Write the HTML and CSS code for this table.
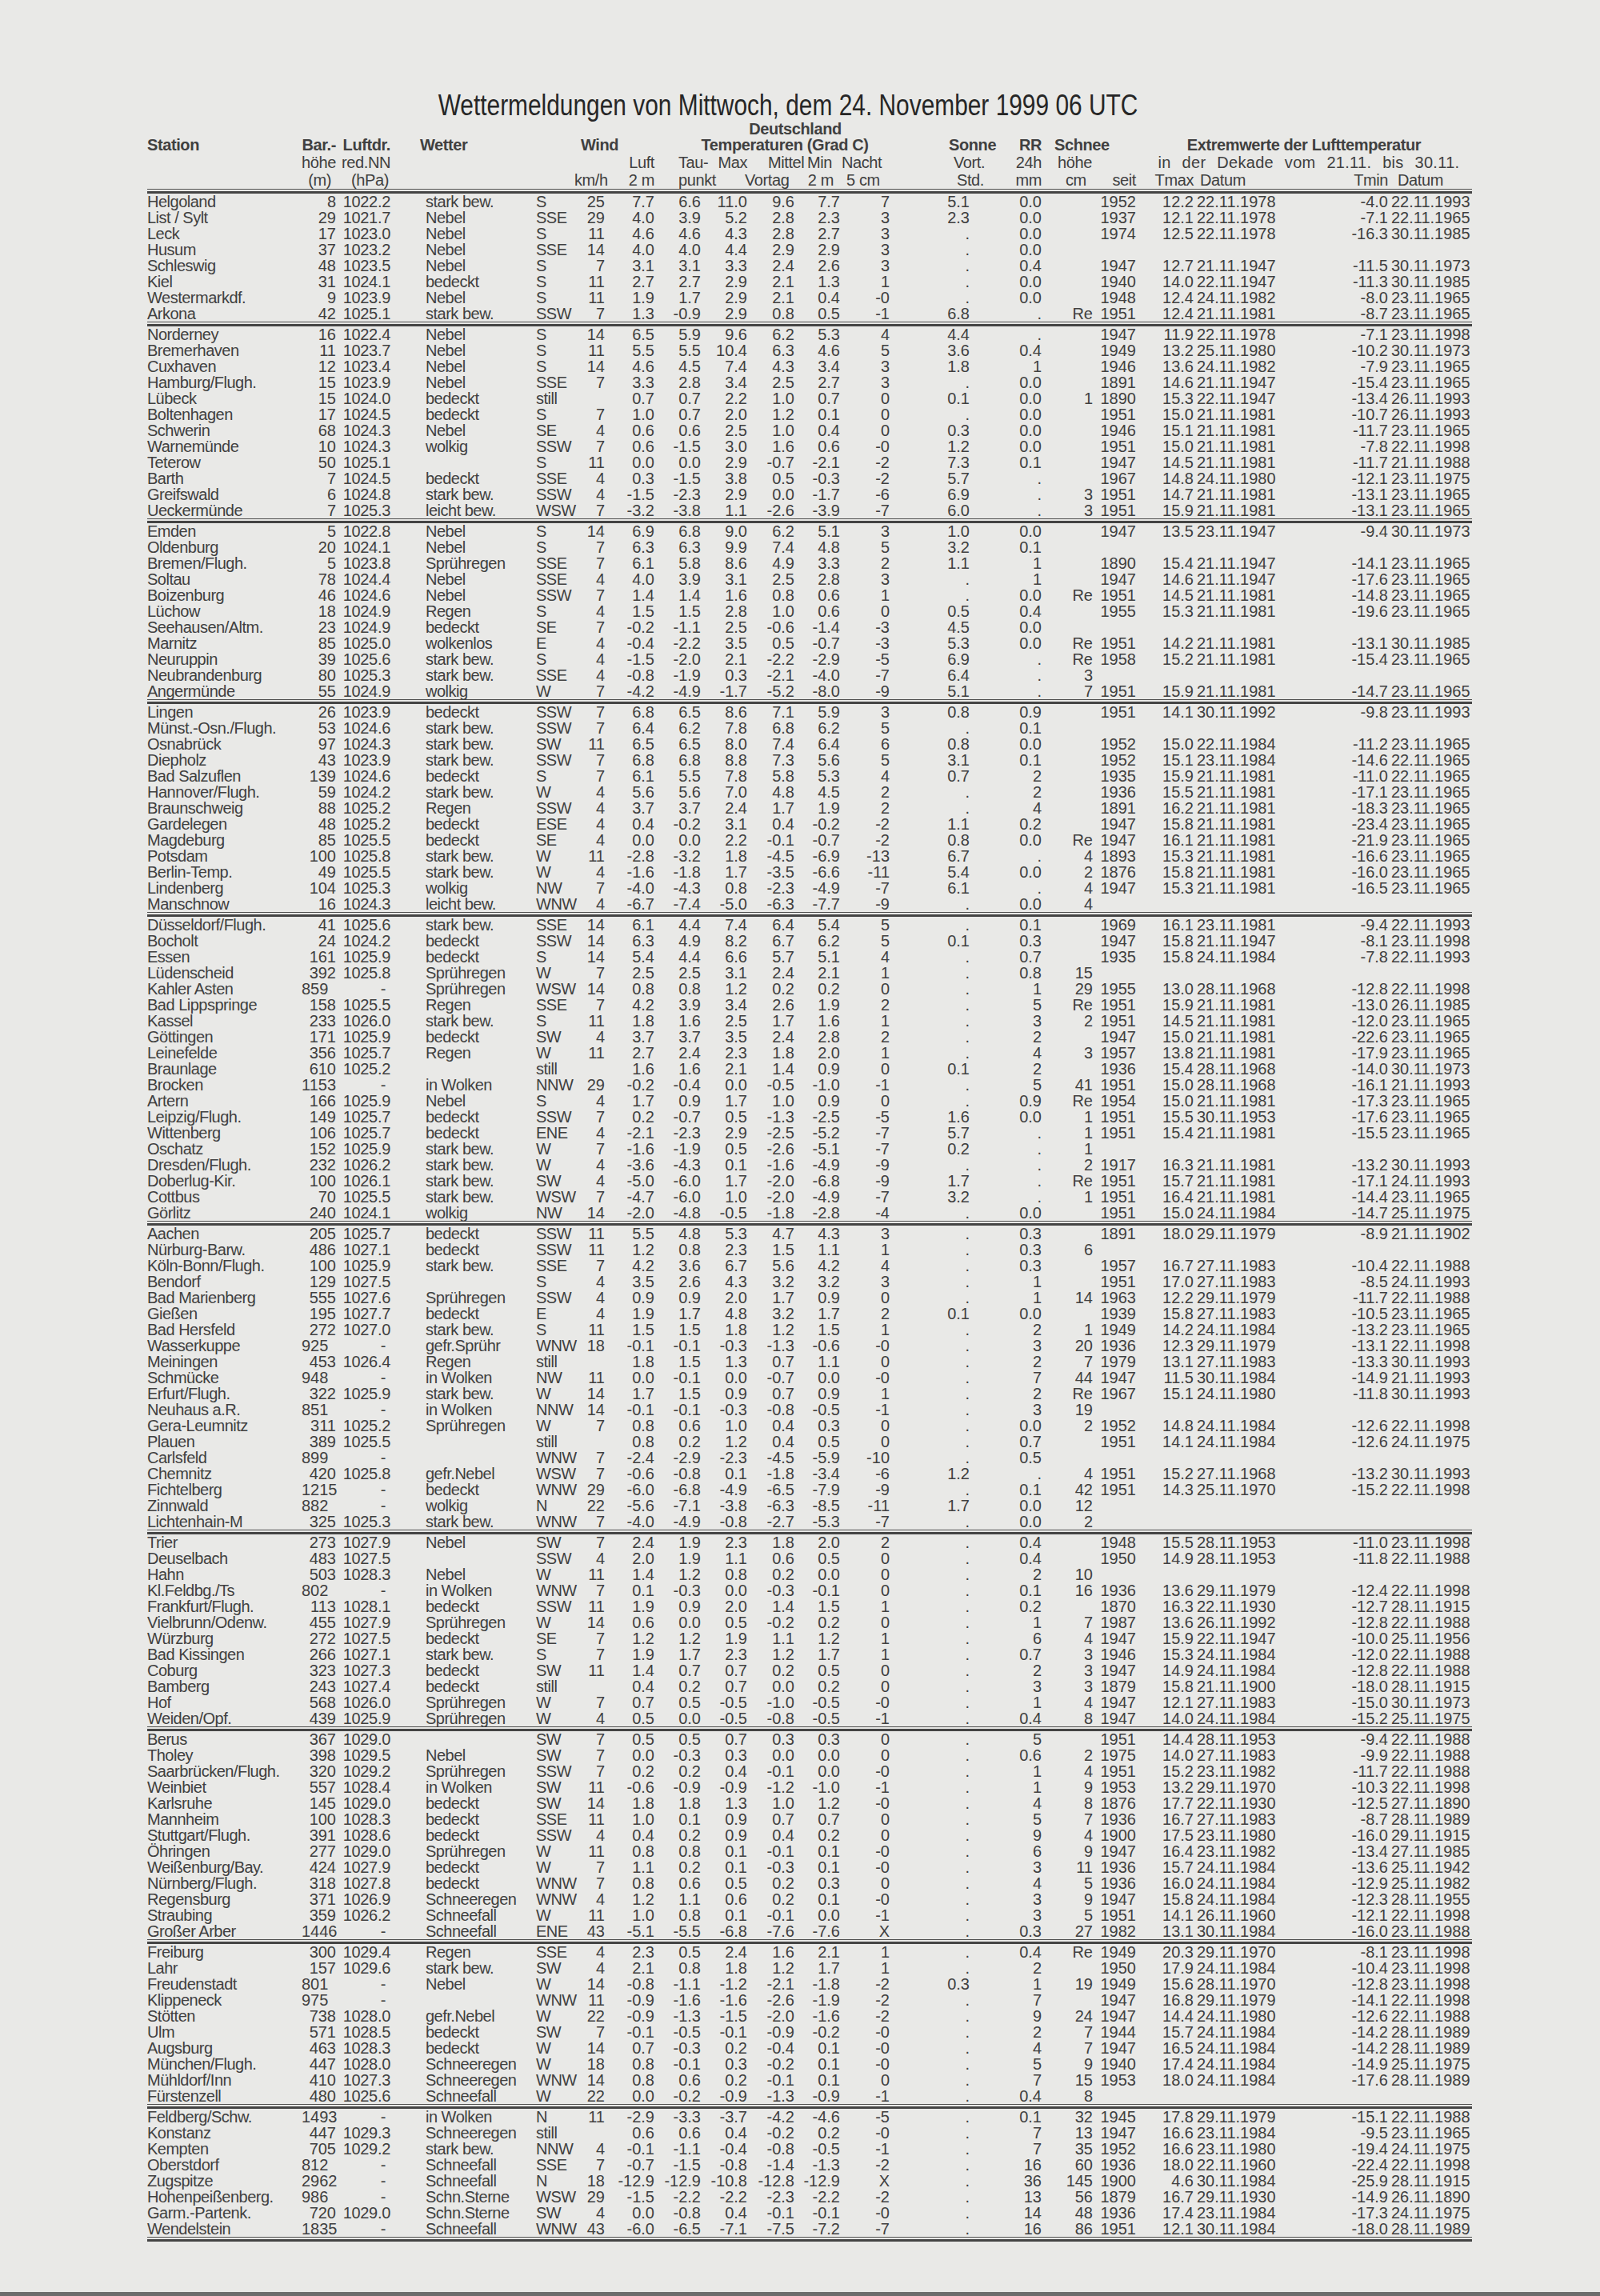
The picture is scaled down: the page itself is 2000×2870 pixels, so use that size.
FILE: index.html
```html
<!DOCTYPE html>
<html lang="de">
<head>
<meta charset="utf-8">
<title>Wettermeldungen 24. November 1999</title>
<link rel="stylesheet" href="styles.css">
</head>
<body>
<main class="page">
<h1 class="title">Wettermeldungen von Mittwoch, dem 24. November 1999 06 UTC</h1>
<table class="wx">
<colgroup>
<col class="c1"><col class="c2"><col class="c3"><col class="c4"><col class="c5"><col class="c6"><col class="c7"><col class="c8"><col class="c9"><col class="c10"><col class="c11"><col class="c12"><col class="c13"><col class="c14"><col class="c15"><col class="c16"><col class="c17"><col class="c18"><col class="c19"><col class="c20">
</colgroup>
<thead>
<tr class="ha"><td colspan="6"></td><td colspan="7" class="deu">Deutschland</td><td colspan="7"></td></tr>
<tr class="hb"><td class="h-st">Station</td><td>Bar.-</td><td>Luftdr.</td><td class="h-wet">Wetter</td><td colspan="2" class="h-wind">Wind</td><td colspan="6" class="h-temp">Temperaturen (Grad C)</td><td class="h-son">Sonne</td><td>RR</td><td class="h-sch">Schnee</td><td colspan="5" class="h-ext">Extremwerte der Lufttemperatur</td></tr>
<tr class="hc"><td></td><td>höhe</td><td>red.NN</td><td></td><td></td><td></td><td>Luft</td><td class="h-tau">Tau-</td><td>Max</td><td class="h-mit">Mittel</td><td class="h-min">Min</td><td class="h-na">Nacht</td><td class="h-vort">Vort.</td><td>24h</td><td class="h-sh">höhe</td><td colspan="5" class="h-dek">in der Dekade vom 21.11. bis 30.11.</td></tr>
<tr class="hd"><td></td><td class="h-m">(m)</td><td class="h-hpa">(hPa)</td><td></td><td></td><td>km/h</td><td>2 m</td><td class="h-tau">punkt</td><td colspan="2" class="h-vor">Vortag</td><td class="h-2m">2 m</td><td class="h-5cm">5 cm</td><td class="h-std">Std.</td><td>mm</td><td class="h-cm">cm</td><td>seit</td><td>Tmax</td><td class="h-dat">Datum</td><td>Tmin</td><td class="h-dat2">Datum</td></tr>
<tr class="s"><td colspan="20"></td></tr>
</thead>
<tbody>
<tr><td>Helgoland<td>8<td>1022.2<td>stark bew.<td>S<td>25<td>7.7<td>6.6<td>11.0<td>9.6<td>7.7<td>7<td>5.1<td>0.0<td><td>1952<td>12.2<td>22.11.1978<td>-4.0<td>22.11.1993</tr>
<tr><td>List / Sylt<td>29<td>1021.7<td>Nebel<td>SSE<td>29<td>4.0<td>3.9<td>5.2<td>2.8<td>2.3<td>3<td>2.3<td>0.0<td><td>1937<td>12.1<td>22.11.1978<td>-7.1<td>22.11.1965</tr>
<tr><td>Leck<td>17<td>1023.0<td>Nebel<td>S<td>11<td>4.6<td>4.6<td>4.3<td>2.8<td>2.7<td>3<td>.<td>0.0<td><td>1974<td>12.5<td>22.11.1978<td>-16.3<td>30.11.1985</tr>
<tr><td>Husum<td>37<td>1023.2<td>Nebel<td>SSE<td>14<td>4.0<td>4.0<td>4.4<td>2.9<td>2.9<td>3<td>.<td>0.0</tr>
<tr><td>Schleswig<td>48<td>1023.5<td>Nebel<td>S<td>7<td>3.1<td>3.1<td>3.3<td>2.4<td>2.6<td>3<td>.<td>0.4<td><td>1947<td>12.7<td>21.11.1947<td>-11.5<td>30.11.1973</tr>
<tr><td>Kiel<td>31<td>1024.1<td>bedeckt<td>S<td>11<td>2.7<td>2.7<td>2.9<td>2.1<td>1.3<td>1<td>.<td>0.0<td><td>1940<td>14.0<td>22.11.1947<td>-11.3<td>30.11.1985</tr>
<tr><td>Westermarkdf.<td>9<td>1023.9<td>Nebel<td>S<td>11<td>1.9<td>1.7<td>2.9<td>2.1<td>0.4<td>-0<td>.<td>0.0<td><td>1948<td>12.4<td>24.11.1982<td>-8.0<td>23.11.1965</tr>
<tr><td>Arkona<td>42<td>1025.1<td>stark bew.<td>SSW<td>7<td>1.3<td>-0.9<td>2.9<td>0.8<td>0.5<td>-1<td>6.8<td>.<td>Re<td>1951<td>12.4<td>21.11.1981<td>-8.7<td>23.11.1965</tr>
<tr class="s"><td colspan="20"></td></tr>
<tr><td>Norderney<td>16<td>1022.4<td>Nebel<td>S<td>14<td>6.5<td>5.9<td>9.6<td>6.2<td>5.3<td>4<td>4.4<td>.<td><td>1947<td>11.9<td>22.11.1978<td>-7.1<td>23.11.1998</tr>
<tr><td>Bremerhaven<td>11<td>1023.7<td>Nebel<td>S<td>11<td>5.5<td>5.5<td>10.4<td>6.3<td>4.6<td>5<td>3.6<td>0.4<td><td>1949<td>13.2<td>25.11.1980<td>-10.2<td>30.11.1973</tr>
<tr><td>Cuxhaven<td>12<td>1023.4<td>Nebel<td>S<td>14<td>4.6<td>4.5<td>7.4<td>4.3<td>3.4<td>3<td>1.8<td>1<td><td>1946<td>13.6<td>24.11.1982<td>-7.9<td>23.11.1965</tr>
<tr><td>Hamburg/Flugh.<td>15<td>1023.9<td>Nebel<td>SSE<td>7<td>3.3<td>2.8<td>3.4<td>2.5<td>2.7<td>3<td>.<td>0.0<td><td>1891<td>14.6<td>21.11.1947<td>-15.4<td>23.11.1965</tr>
<tr><td>Lübeck<td>15<td>1024.0<td>bedeckt<td>still<td><td>0.7<td>0.7<td>2.2<td>1.0<td>0.7<td>0<td>0.1<td>0.0<td>1<td>1890<td>15.3<td>22.11.1947<td>-13.4<td>26.11.1993</tr>
<tr><td>Boltenhagen<td>17<td>1024.5<td>bedeckt<td>S<td>7<td>1.0<td>0.7<td>2.0<td>1.2<td>0.1<td>0<td>.<td>0.0<td><td>1951<td>15.0<td>21.11.1981<td>-10.7<td>26.11.1993</tr>
<tr><td>Schwerin<td>68<td>1024.3<td>Nebel<td>SE<td>4<td>0.6<td>0.6<td>2.5<td>1.0<td>0.4<td>0<td>0.3<td>0.0<td><td>1946<td>15.1<td>21.11.1981<td>-11.7<td>23.11.1965</tr>
<tr><td>Warnemünde<td>10<td>1024.3<td>wolkig<td>SSW<td>7<td>0.6<td>-1.5<td>3.0<td>1.6<td>0.6<td>-0<td>1.2<td>0.0<td><td>1951<td>15.0<td>21.11.1981<td>-7.8<td>22.11.1998</tr>
<tr><td>Teterow<td>50<td>1025.1<td><td>S<td>11<td>0.0<td>0.0<td>2.9<td>-0.7<td>-2.1<td>-2<td>7.3<td>0.1<td><td>1947<td>14.5<td>21.11.1981<td>-11.7<td>21.11.1988</tr>
<tr><td>Barth<td>7<td>1024.5<td>bedeckt<td>SSE<td>4<td>0.3<td>-1.5<td>3.8<td>0.5<td>-0.3<td>-2<td>5.7<td>.<td><td>1967<td>14.8<td>24.11.1980<td>-12.1<td>23.11.1975</tr>
<tr><td>Greifswald<td>6<td>1024.8<td>stark bew.<td>SSW<td>4<td>-1.5<td>-2.3<td>2.9<td>0.0<td>-1.7<td>-6<td>6.9<td>.<td>3<td>1951<td>14.7<td>21.11.1981<td>-13.1<td>23.11.1965</tr>
<tr><td>Ueckermünde<td>7<td>1025.3<td>leicht bew.<td>WSW<td>7<td>-3.2<td>-3.8<td>1.1<td>-2.6<td>-3.9<td>-7<td>6.0<td>.<td>3<td>1951<td>15.9<td>21.11.1981<td>-13.1<td>23.11.1965</tr>
<tr class="s"><td colspan="20"></td></tr>
<tr><td>Emden<td>5<td>1022.8<td>Nebel<td>S<td>14<td>6.9<td>6.8<td>9.0<td>6.2<td>5.1<td>3<td>1.0<td>0.0<td><td>1947<td>13.5<td>23.11.1947<td>-9.4<td>30.11.1973</tr>
<tr><td>Oldenburg<td>20<td>1024.1<td>Nebel<td>S<td>7<td>6.3<td>6.3<td>9.9<td>7.4<td>4.8<td>5<td>3.2<td>0.1</tr>
<tr><td>Bremen/Flugh.<td>5<td>1023.8<td>Sprühregen<td>SSE<td>7<td>6.1<td>5.8<td>8.6<td>4.9<td>3.3<td>2<td>1.1<td>1<td><td>1890<td>15.4<td>21.11.1947<td>-14.1<td>23.11.1965</tr>
<tr><td>Soltau<td>78<td>1024.4<td>Nebel<td>SSE<td>4<td>4.0<td>3.9<td>3.1<td>2.5<td>2.8<td>3<td>.<td>1<td><td>1947<td>14.6<td>21.11.1947<td>-17.6<td>23.11.1965</tr>
<tr><td>Boizenburg<td>46<td>1024.6<td>Nebel<td>SSW<td>7<td>1.4<td>1.4<td>1.6<td>0.8<td>0.6<td>1<td>.<td>0.0<td>Re<td>1951<td>14.5<td>21.11.1981<td>-14.8<td>23.11.1965</tr>
<tr><td>Lüchow<td>18<td>1024.9<td>Regen<td>S<td>4<td>1.5<td>1.5<td>2.8<td>1.0<td>0.6<td>0<td>0.5<td>0.4<td><td>1955<td>15.3<td>21.11.1981<td>-19.6<td>23.11.1965</tr>
<tr><td>Seehausen/Altm.<td>23<td>1024.9<td>bedeckt<td>SE<td>7<td>-0.2<td>-1.1<td>2.5<td>-0.6<td>-1.4<td>-3<td>4.5<td>0.0</tr>
<tr><td>Marnitz<td>85<td>1025.0<td>wolkenlos<td>E<td>4<td>-0.4<td>-2.2<td>3.5<td>0.5<td>-0.7<td>-3<td>5.3<td>0.0<td>Re<td>1951<td>14.2<td>21.11.1981<td>-13.1<td>30.11.1985</tr>
<tr><td>Neuruppin<td>39<td>1025.6<td>stark bew.<td>S<td>4<td>-1.5<td>-2.0<td>2.1<td>-2.2<td>-2.9<td>-5<td>6.9<td>.<td>Re<td>1958<td>15.2<td>21.11.1981<td>-15.4<td>23.11.1965</tr>
<tr><td>Neubrandenburg<td>80<td>1025.3<td>stark bew.<td>SSE<td>4<td>-0.8<td>-1.9<td>0.3<td>-2.1<td>-4.0<td>-7<td>6.4<td>.<td>3</tr>
<tr><td>Angermünde<td>55<td>1024.9<td>wolkig<td>W<td>7<td>-4.2<td>-4.9<td>-1.7<td>-5.2<td>-8.0<td>-9<td>5.1<td>.<td>7<td>1951<td>15.9<td>21.11.1981<td>-14.7<td>23.11.1965</tr>
<tr class="s"><td colspan="20"></td></tr>
<tr><td>Lingen<td>26<td>1023.9<td>bedeckt<td>SSW<td>7<td>6.8<td>6.5<td>8.6<td>7.1<td>5.9<td>3<td>0.8<td>0.9<td><td>1951<td>14.1<td>30.11.1992<td>-9.8<td>23.11.1993</tr>
<tr><td>Münst.-Osn./Flugh.<td>53<td>1024.6<td>stark bew.<td>SSW<td>7<td>6.4<td>6.2<td>7.8<td>6.8<td>6.2<td>5<td>.<td>0.1</tr>
<tr><td>Osnabrück<td>97<td>1024.3<td>stark bew.<td>SW<td>11<td>6.5<td>6.5<td>8.0<td>7.4<td>6.4<td>6<td>0.8<td>0.0<td><td>1952<td>15.0<td>22.11.1984<td>-11.2<td>23.11.1965</tr>
<tr><td>Diepholz<td>43<td>1023.9<td>stark bew.<td>SSW<td>7<td>6.8<td>6.8<td>8.8<td>7.3<td>5.6<td>5<td>3.1<td>0.1<td><td>1952<td>15.1<td>23.11.1984<td>-14.6<td>22.11.1965</tr>
<tr><td>Bad Salzuflen<td>139<td>1024.6<td>bedeckt<td>S<td>7<td>6.1<td>5.5<td>7.8<td>5.8<td>5.3<td>4<td>0.7<td>2<td><td>1935<td>15.9<td>21.11.1981<td>-11.0<td>22.11.1965</tr>
<tr><td>Hannover/Flugh.<td>59<td>1024.2<td>stark bew.<td>W<td>4<td>5.6<td>5.6<td>7.0<td>4.8<td>4.5<td>2<td>.<td>2<td><td>1936<td>15.5<td>21.11.1981<td>-17.1<td>23.11.1965</tr>
<tr><td>Braunschweig<td>88<td>1025.2<td>Regen<td>SSW<td>4<td>3.7<td>3.7<td>2.4<td>1.7<td>1.9<td>2<td>.<td>4<td><td>1891<td>16.2<td>21.11.1981<td>-18.3<td>23.11.1965</tr>
<tr><td>Gardelegen<td>48<td>1025.2<td>bedeckt<td>ESE<td>4<td>0.4<td>-0.2<td>3.1<td>0.4<td>-0.2<td>-2<td>1.1<td>0.2<td><td>1947<td>15.8<td>21.11.1981<td>-23.4<td>23.11.1965</tr>
<tr><td>Magdeburg<td>85<td>1025.5<td>bedeckt<td>SE<td>4<td>0.0<td>0.0<td>2.2<td>-0.1<td>-0.7<td>-2<td>0.8<td>0.0<td>Re<td>1947<td>16.1<td>21.11.1981<td>-21.9<td>23.11.1965</tr>
<tr><td>Potsdam<td>100<td>1025.8<td>stark bew.<td>W<td>11<td>-2.8<td>-3.2<td>1.8<td>-4.5<td>-6.9<td>-13<td>6.7<td>.<td>4<td>1893<td>15.3<td>21.11.1981<td>-16.6<td>23.11.1965</tr>
<tr><td>Berlin-Temp.<td>49<td>1025.5<td>stark bew.<td>W<td>4<td>-1.6<td>-1.8<td>1.7<td>-3.5<td>-6.6<td>-11<td>5.4<td>0.0<td>2<td>1876<td>15.8<td>21.11.1981<td>-16.0<td>23.11.1965</tr>
<tr><td>Lindenberg<td>104<td>1025.3<td>wolkig<td>NW<td>7<td>-4.0<td>-4.3<td>0.8<td>-2.3<td>-4.9<td>-7<td>6.1<td>.<td>4<td>1947<td>15.3<td>21.11.1981<td>-16.5<td>23.11.1965</tr>
<tr><td>Manschnow<td>16<td>1024.3<td>leicht bew.<td>WNW<td>4<td>-6.7<td>-7.4<td>-5.0<td>-6.3<td>-7.7<td>-9<td>.<td>0.0<td>4</tr>
<tr class="s"><td colspan="20"></td></tr>
<tr><td>Düsseldorf/Flugh.<td>41<td>1025.6<td>stark bew.<td>SSE<td>14<td>6.1<td>4.4<td>7.4<td>6.4<td>5.4<td>5<td>.<td>0.1<td><td>1969<td>16.1<td>23.11.1981<td>-9.4<td>22.11.1993</tr>
<tr><td>Bocholt<td>24<td>1024.2<td>bedeckt<td>SSW<td>14<td>6.3<td>4.9<td>8.2<td>6.7<td>6.2<td>5<td>0.1<td>0.3<td><td>1947<td>15.8<td>21.11.1947<td>-8.1<td>23.11.1998</tr>
<tr><td>Essen<td>161<td>1025.9<td>bedeckt<td>S<td>14<td>5.4<td>4.4<td>6.6<td>5.7<td>5.1<td>4<td>.<td>0.7<td><td>1935<td>15.8<td>24.11.1984<td>-7.8<td>22.11.1993</tr>
<tr><td>Lüdenscheid<td>392<td>1025.8<td>Sprühregen<td>W<td>7<td>2.5<td>2.5<td>3.1<td>2.4<td>2.1<td>1<td>.<td>0.8<td>15</tr>
<tr><td>Kahler Asten<td class="l">859<td class="d">-<td>Sprühregen<td>WSW<td>14<td>0.8<td>0.8<td>1.2<td>0.2<td>0.2<td>0<td>.<td>1<td>29<td>1955<td>13.0<td>28.11.1968<td>-12.8<td>22.11.1998</tr>
<tr><td>Bad Lippspringe<td>158<td>1025.5<td>Regen<td>SSE<td>7<td>4.2<td>3.9<td>3.4<td>2.6<td>1.9<td>2<td>.<td>5<td>Re<td>1951<td>15.9<td>21.11.1981<td>-13.0<td>26.11.1985</tr>
<tr><td>Kassel<td>233<td>1026.0<td>stark bew.<td>S<td>11<td>1.8<td>1.6<td>2.5<td>1.7<td>1.6<td>1<td>.<td>3<td>2<td>1951<td>14.5<td>21.11.1981<td>-12.0<td>23.11.1965</tr>
<tr><td>Göttingen<td>171<td>1025.9<td>bedeckt<td>SW<td>4<td>3.7<td>3.7<td>3.5<td>2.4<td>2.8<td>2<td>.<td>2<td><td>1947<td>15.0<td>21.11.1981<td>-22.6<td>23.11.1965</tr>
<tr><td>Leinefelde<td>356<td>1025.7<td>Regen<td>W<td>11<td>2.7<td>2.4<td>2.3<td>1.8<td>2.0<td>1<td>.<td>4<td>3<td>1957<td>13.8<td>21.11.1981<td>-17.9<td>23.11.1965</tr>
<tr><td>Braunlage<td>610<td>1025.2<td><td>still<td><td>1.6<td>1.6<td>2.1<td>1.4<td>0.9<td>0<td>0.1<td>2<td><td>1936<td>15.4<td>28.11.1968<td>-14.0<td>30.11.1973</tr>
<tr><td>Brocken<td class="l">1153<td class="d">-<td>in Wolken<td>NNW<td>29<td>-0.2<td>-0.4<td>0.0<td>-0.5<td>-1.0<td>-1<td>.<td>5<td>41<td>1951<td>15.0<td>28.11.1968<td>-16.1<td>21.11.1993</tr>
<tr><td>Artern<td>166<td>1025.9<td>Nebel<td>S<td>4<td>1.7<td>0.9<td>1.7<td>1.0<td>0.9<td>0<td>.<td>0.9<td>Re<td>1954<td>15.0<td>21.11.1981<td>-17.3<td>23.11.1965</tr>
<tr><td>Leipzig/Flugh.<td>149<td>1025.7<td>bedeckt<td>SSW<td>7<td>0.2<td>-0.7<td>0.5<td>-1.3<td>-2.5<td>-5<td>1.6<td>0.0<td>1<td>1951<td>15.5<td>30.11.1953<td>-17.6<td>23.11.1965</tr>
<tr><td>Wittenberg<td>106<td>1025.7<td>bedeckt<td>ENE<td>4<td>-2.1<td>-2.3<td>2.9<td>-2.5<td>-5.2<td>-7<td>5.7<td>.<td>1<td>1951<td>15.4<td>21.11.1981<td>-15.5<td>23.11.1965</tr>
<tr><td>Oschatz<td>152<td>1025.9<td>stark bew.<td>W<td>7<td>-1.6<td>-1.9<td>0.5<td>-2.6<td>-5.1<td>-7<td>0.2<td>.<td>1</tr>
<tr><td>Dresden/Flugh.<td>232<td>1026.2<td>stark bew.<td>W<td>4<td>-3.6<td>-4.3<td>0.1<td>-1.6<td>-4.9<td>-9<td>.<td>.<td>2<td>1917<td>16.3<td>21.11.1981<td>-13.2<td>30.11.1993</tr>
<tr><td>Doberlug-Kir.<td>100<td>1026.1<td>stark bew.<td>SW<td>4<td>-5.0<td>-6.0<td>1.7<td>-2.0<td>-6.8<td>-9<td>1.7<td>.<td>Re<td>1951<td>15.7<td>21.11.1981<td>-17.1<td>24.11.1993</tr>
<tr><td>Cottbus<td>70<td>1025.5<td>stark bew.<td>WSW<td>7<td>-4.7<td>-6.0<td>1.0<td>-2.0<td>-4.9<td>-7<td>3.2<td>.<td>1<td>1951<td>16.4<td>21.11.1981<td>-14.4<td>23.11.1965</tr>
<tr><td>Görlitz<td>240<td>1024.1<td>wolkig<td>NW<td>14<td>-2.0<td>-4.8<td>-0.5<td>-1.8<td>-2.8<td>-4<td>.<td>0.0<td><td>1951<td>15.0<td>24.11.1984<td>-14.7<td>25.11.1975</tr>
<tr class="s"><td colspan="20"></td></tr>
<tr><td>Aachen<td>205<td>1025.7<td>bedeckt<td>SSW<td>11<td>5.5<td>4.8<td>5.3<td>4.7<td>4.3<td>3<td>.<td>0.3<td><td>1891<td>18.0<td>29.11.1979<td>-8.9<td>21.11.1902</tr>
<tr><td>Nürburg-Barw.<td>486<td>1027.1<td>bedeckt<td>SSW<td>11<td>1.2<td>0.8<td>2.3<td>1.5<td>1.1<td>1<td>.<td>0.3<td>6</tr>
<tr><td>Köln-Bonn/Flugh.<td>100<td>1025.9<td>stark bew.<td>SSE<td>7<td>4.2<td>3.6<td>6.7<td>5.6<td>4.2<td>4<td>.<td>0.3<td><td>1957<td>16.7<td>27.11.1983<td>-10.4<td>22.11.1988</tr>
<tr><td>Bendorf<td>129<td>1027.5<td><td>S<td>4<td>3.5<td>2.6<td>4.3<td>3.2<td>3.2<td>3<td>.<td>1<td><td>1951<td>17.0<td>27.11.1983<td>-8.5<td>24.11.1993</tr>
<tr><td>Bad Marienberg<td>555<td>1027.6<td>Sprühregen<td>SSW<td>4<td>0.9<td>0.9<td>2.0<td>1.7<td>0.9<td>0<td>.<td>1<td>14<td>1963<td>12.2<td>29.11.1979<td>-11.7<td>22.11.1988</tr>
<tr><td>Gießen<td>195<td>1027.7<td>bedeckt<td>E<td>4<td>1.9<td>1.7<td>4.8<td>3.2<td>1.7<td>2<td>0.1<td>0.0<td><td>1939<td>15.8<td>27.11.1983<td>-10.5<td>23.11.1965</tr>
<tr><td>Bad Hersfeld<td>272<td>1027.0<td>stark bew.<td>S<td>11<td>1.5<td>1.5<td>1.8<td>1.2<td>1.5<td>1<td>.<td>2<td>1<td>1949<td>14.2<td>24.11.1984<td>-13.2<td>23.11.1965</tr>
<tr><td>Wasserkuppe<td class="l">925<td class="d">-<td>gefr.Sprühr<td>WNW<td>18<td>-0.1<td>-0.1<td>-0.3<td>-1.3<td>-0.6<td>-0<td>.<td>3<td>20<td>1936<td>12.3<td>29.11.1979<td>-13.1<td>22.11.1998</tr>
<tr><td>Meiningen<td>453<td>1026.4<td>Regen<td>still<td><td>1.8<td>1.5<td>1.3<td>0.7<td>1.1<td>0<td>.<td>2<td>7<td>1979<td>13.1<td>27.11.1983<td>-13.3<td>30.11.1993</tr>
<tr><td>Schmücke<td class="l">948<td class="d">-<td>in Wolken<td>NW<td>11<td>0.0<td>-0.1<td>0.0<td>-0.7<td>0.0<td>-0<td>.<td>7<td>44<td>1947<td>11.5<td>30.11.1984<td>-14.9<td>21.11.1993</tr>
<tr><td>Erfurt/Flugh.<td>322<td>1025.9<td>stark bew.<td>W<td>14<td>1.7<td>1.5<td>0.9<td>0.7<td>0.9<td>1<td>.<td>2<td>Re<td>1967<td>15.1<td>24.11.1980<td>-11.8<td>30.11.1993</tr>
<tr><td>Neuhaus a.R.<td class="l">851<td class="d">-<td>in Wolken<td>NNW<td>14<td>-0.1<td>-0.1<td>-0.3<td>-0.8<td>-0.5<td>-1<td>.<td>3<td>19</tr>
<tr><td>Gera-Leumnitz<td>311<td>1025.2<td>Sprühregen<td>W<td>7<td>0.8<td>0.6<td>1.0<td>0.4<td>0.3<td>0<td>.<td>0.0<td>2<td>1952<td>14.8<td>24.11.1984<td>-12.6<td>22.11.1998</tr>
<tr><td>Plauen<td>389<td>1025.5<td><td>still<td><td>0.8<td>0.2<td>1.2<td>0.4<td>0.5<td>0<td>.<td>0.7<td><td>1951<td>14.1<td>24.11.1984<td>-12.6<td>24.11.1975</tr>
<tr><td>Carlsfeld<td class="l">899<td class="d">-<td><td>WNW<td>7<td>-2.4<td>-2.9<td>-2.3<td>-4.5<td>-5.9<td>-10<td>.<td>0.5</tr>
<tr><td>Chemnitz<td>420<td>1025.8<td>gefr.Nebel<td>WSW<td>7<td>-0.6<td>-0.8<td>0.1<td>-1.8<td>-3.4<td>-6<td>1.2<td>.<td>4<td>1951<td>15.2<td>27.11.1968<td>-13.2<td>30.11.1993</tr>
<tr><td>Fichtelberg<td class="l">1215<td class="d">-<td>bedeckt<td>WNW<td>29<td>-6.0<td>-6.8<td>-4.9<td>-6.5<td>-7.9<td>-9<td>.<td>0.1<td>42<td>1951<td>14.3<td>25.11.1970<td>-15.2<td>22.11.1998</tr>
<tr><td>Zinnwald<td class="l">882<td class="d">-<td>wolkig<td>N<td>22<td>-5.6<td>-7.1<td>-3.8<td>-6.3<td>-8.5<td>-11<td>1.7<td>0.0<td>12</tr>
<tr><td>Lichtenhain-M<td>325<td>1025.3<td>stark bew.<td>WNW<td>7<td>-4.0<td>-4.9<td>-0.8<td>-2.7<td>-5.3<td>-7<td>.<td>0.0<td>2</tr>
<tr class="s"><td colspan="20"></td></tr>
<tr><td>Trier<td>273<td>1027.9<td>Nebel<td>SW<td>7<td>2.4<td>1.9<td>2.3<td>1.8<td>2.0<td>2<td>.<td>0.4<td><td>1948<td>15.5<td>28.11.1953<td>-11.0<td>23.11.1998</tr>
<tr><td>Deuselbach<td>483<td>1027.5<td><td>SSW<td>4<td>2.0<td>1.9<td>1.1<td>0.6<td>0.5<td>0<td>.<td>0.4<td><td>1950<td>14.9<td>28.11.1953<td>-11.8<td>22.11.1988</tr>
<tr><td>Hahn<td>503<td>1028.3<td>Nebel<td>W<td>11<td>1.4<td>1.2<td>0.8<td>0.2<td>0.0<td>0<td>.<td>2<td>10</tr>
<tr><td>Kl.Feldbg./Ts<td class="l">802<td class="d">-<td>in Wolken<td>WNW<td>7<td>0.1<td>-0.3<td>0.0<td>-0.3<td>-0.1<td>0<td>.<td>0.1<td>16<td>1936<td>13.6<td>29.11.1979<td>-12.4<td>22.11.1998</tr>
<tr><td>Frankfurt/Flugh.<td>113<td>1028.1<td>bedeckt<td>SSW<td>11<td>1.9<td>0.9<td>2.0<td>1.4<td>1.5<td>1<td>.<td>0.2<td><td>1870<td>16.3<td>22.11.1930<td>-12.7<td>28.11.1915</tr>
<tr><td>Vielbrunn/Odenw.<td>455<td>1027.9<td>Sprühregen<td>W<td>14<td>0.6<td>0.0<td>0.5<td>-0.2<td>0.2<td>0<td>.<td>1<td>7<td>1987<td>13.6<td>26.11.1992<td>-12.8<td>22.11.1988</tr>
<tr><td>Würzburg<td>272<td>1027.5<td>bedeckt<td>SE<td>7<td>1.2<td>1.2<td>1.9<td>1.1<td>1.2<td>1<td>.<td>6<td>4<td>1947<td>15.9<td>22.11.1947<td>-10.0<td>25.11.1956</tr>
<tr><td>Bad Kissingen<td>266<td>1027.1<td>stark bew.<td>S<td>7<td>1.9<td>1.7<td>2.3<td>1.2<td>1.7<td>1<td>.<td>0.7<td>3<td>1946<td>15.3<td>24.11.1984<td>-12.0<td>22.11.1988</tr>
<tr><td>Coburg<td>323<td>1027.3<td>bedeckt<td>SW<td>11<td>1.4<td>0.7<td>0.7<td>0.2<td>0.5<td>0<td>.<td>2<td>3<td>1947<td>14.9<td>24.11.1984<td>-12.8<td>22.11.1988</tr>
<tr><td>Bamberg<td>243<td>1027.4<td>bedeckt<td>still<td><td>0.4<td>0.2<td>0.7<td>0.0<td>0.2<td>0<td>.<td>3<td>3<td>1879<td>15.8<td>21.11.1900<td>-18.0<td>28.11.1915</tr>
<tr><td>Hof<td>568<td>1026.0<td>Sprühregen<td>W<td>7<td>0.7<td>0.5<td>-0.5<td>-1.0<td>-0.5<td>-0<td>.<td>1<td>4<td>1947<td>12.1<td>27.11.1983<td>-15.0<td>30.11.1973</tr>
<tr><td>Weiden/Opf.<td>439<td>1025.9<td>Sprühregen<td>W<td>4<td>0.5<td>0.0<td>-0.5<td>-0.8<td>-0.5<td>-1<td>.<td>0.4<td>8<td>1947<td>14.0<td>24.11.1984<td>-15.2<td>25.11.1975</tr>
<tr class="s"><td colspan="20"></td></tr>
<tr><td>Berus<td>367<td>1029.0<td><td>SW<td>7<td>0.5<td>0.5<td>0.7<td>0.3<td>0.3<td>0<td>.<td>5<td><td>1951<td>14.4<td>28.11.1953<td>-9.4<td>22.11.1988</tr>
<tr><td>Tholey<td>398<td>1029.5<td>Nebel<td>SW<td>7<td>0.0<td>-0.3<td>0.3<td>0.0<td>0.0<td>0<td>.<td>0.6<td>2<td>1975<td>14.0<td>27.11.1983<td>-9.9<td>22.11.1988</tr>
<tr><td>Saarbrücken/Flugh.<td>320<td>1029.2<td>Sprühregen<td>SSW<td>7<td>0.2<td>0.2<td>0.4<td>-0.1<td>0.0<td>-0<td>.<td>1<td>4<td>1951<td>15.2<td>23.11.1982<td>-11.7<td>22.11.1988</tr>
<tr><td>Weinbiet<td>557<td>1028.4<td>in Wolken<td>SW<td>11<td>-0.6<td>-0.9<td>-0.9<td>-1.2<td>-1.0<td>-1<td>.<td>1<td>9<td>1953<td>13.2<td>29.11.1970<td>-10.3<td>22.11.1998</tr>
<tr><td>Karlsruhe<td>145<td>1029.0<td>bedeckt<td>SW<td>14<td>1.8<td>1.8<td>1.3<td>1.0<td>1.2<td>-0<td>.<td>4<td>8<td>1876<td>17.7<td>22.11.1930<td>-12.5<td>27.11.1890</tr>
<tr><td>Mannheim<td>100<td>1028.3<td>bedeckt<td>SSE<td>11<td>1.0<td>0.1<td>0.9<td>0.7<td>0.7<td>0<td>.<td>5<td>7<td>1936<td>16.7<td>27.11.1983<td>-8.7<td>28.11.1989</tr>
<tr><td>Stuttgart/Flugh.<td>391<td>1028.6<td>bedeckt<td>SSW<td>4<td>0.4<td>0.2<td>0.9<td>0.4<td>0.2<td>0<td>.<td>9<td>4<td>1900<td>17.5<td>23.11.1980<td>-16.0<td>29.11.1915</tr>
<tr><td>Öhringen<td>277<td>1029.0<td>Sprühregen<td>W<td>11<td>0.8<td>0.8<td>0.1<td>-0.1<td>0.1<td>-0<td>.<td>6<td>9<td>1947<td>16.4<td>23.11.1982<td>-13.4<td>27.11.1985</tr>
<tr><td>Weißenburg/Bay.<td>424<td>1027.9<td>bedeckt<td>W<td>7<td>1.1<td>0.2<td>0.1<td>-0.3<td>0.1<td>-0<td>.<td>3<td>11<td>1936<td>15.7<td>24.11.1984<td>-13.6<td>25.11.1942</tr>
<tr><td>Nürnberg/Flugh.<td>318<td>1027.8<td>bedeckt<td>WNW<td>7<td>0.8<td>0.6<td>0.5<td>0.2<td>0.3<td>0<td>.<td>4<td>5<td>1936<td>16.0<td>24.11.1984<td>-12.9<td>25.11.1982</tr>
<tr><td>Regensburg<td>371<td>1026.9<td>Schneeregen<td>WNW<td>4<td>1.2<td>1.1<td>0.6<td>0.2<td>0.1<td>-0<td>.<td>3<td>9<td>1947<td>15.8<td>24.11.1984<td>-12.3<td>28.11.1955</tr>
<tr><td>Straubing<td>359<td>1026.2<td>Schneefall<td>W<td>11<td>1.0<td>0.8<td>0.1<td>-0.1<td>0.0<td>-1<td>.<td>3<td>5<td>1951<td>14.1<td>26.11.1960<td>-12.1<td>22.11.1998</tr>
<tr><td>Großer Arber<td class="l">1446<td class="d">-<td>Schneefall<td>ENE<td>43<td>-5.1<td>-5.5<td>-6.8<td>-7.6<td>-7.6<td>X<td>.<td>0.3<td>27<td>1982<td>13.1<td>30.11.1984<td>-16.0<td>23.11.1988</tr>
<tr class="s"><td colspan="20"></td></tr>
<tr><td>Freiburg<td>300<td>1029.4<td>Regen<td>SSE<td>4<td>2.3<td>0.5<td>2.4<td>1.6<td>2.1<td>1<td>.<td>0.4<td>Re<td>1949<td>20.3<td>29.11.1970<td>-8.1<td>23.11.1998</tr>
<tr><td>Lahr<td>157<td>1029.6<td>stark bew.<td>SW<td>4<td>2.1<td>0.8<td>1.8<td>1.2<td>1.7<td>1<td>.<td>2<td><td>1950<td>17.9<td>24.11.1984<td>-10.4<td>23.11.1998</tr>
<tr><td>Freudenstadt<td class="l">801<td class="d">-<td>Nebel<td>W<td>14<td>-0.8<td>-1.1<td>-1.2<td>-2.1<td>-1.8<td>-2<td>0.3<td>1<td>19<td>1949<td>15.6<td>28.11.1970<td>-12.8<td>23.11.1998</tr>
<tr><td>Klippeneck<td class="l">975<td class="d">-<td><td>WNW<td>11<td>-0.9<td>-1.6<td>-1.6<td>-2.6<td>-1.9<td>-2<td>.<td>7<td><td>1947<td>16.8<td>29.11.1979<td>-14.1<td>22.11.1998</tr>
<tr><td>Stötten<td>738<td>1028.0<td>gefr.Nebel<td>W<td>22<td>-0.9<td>-1.3<td>-1.5<td>-2.0<td>-1.6<td>-2<td>.<td>9<td>24<td>1947<td>14.4<td>24.11.1980<td>-12.6<td>22.11.1988</tr>
<tr><td>Ulm<td>571<td>1028.5<td>bedeckt<td>SW<td>7<td>-0.1<td>-0.5<td>-0.1<td>-0.9<td>-0.2<td>-0<td>.<td>2<td>7<td>1944<td>15.7<td>24.11.1984<td>-14.2<td>28.11.1989</tr>
<tr><td>Augsburg<td>463<td>1028.3<td>bedeckt<td>W<td>14<td>0.7<td>-0.3<td>0.2<td>-0.4<td>0.1<td>-0<td>.<td>4<td>7<td>1947<td>16.5<td>24.11.1984<td>-14.2<td>28.11.1989</tr>
<tr><td>München/Flugh.<td>447<td>1028.0<td>Schneeregen<td>W<td>18<td>0.8<td>-0.1<td>0.3<td>-0.2<td>0.1<td>-0<td>.<td>5<td>9<td>1940<td>17.4<td>24.11.1984<td>-14.9<td>25.11.1975</tr>
<tr><td>Mühldorf/Inn<td>410<td>1027.3<td>Schneeregen<td>WNW<td>14<td>0.8<td>0.6<td>0.2<td>-0.1<td>0.1<td>0<td>.<td>7<td>15<td>1953<td>18.0<td>24.11.1984<td>-17.6<td>28.11.1989</tr>
<tr><td>Fürstenzell<td>480<td>1025.6<td>Schneefall<td>W<td>22<td>0.0<td>-0.2<td>-0.9<td>-1.3<td>-0.9<td>-1<td>.<td>0.4<td>8</tr>
<tr class="s"><td colspan="20"></td></tr>
<tr><td>Feldberg/Schw.<td class="l">1493<td class="d">-<td>in Wolken<td>N<td>11<td>-2.9<td>-3.3<td>-3.7<td>-4.2<td>-4.6<td>-5<td>.<td>0.1<td>32<td>1945<td>17.8<td>29.11.1979<td>-15.1<td>22.11.1988</tr>
<tr><td>Konstanz<td>447<td>1029.3<td>Schneeregen<td>still<td><td>0.6<td>0.6<td>0.4<td>-0.2<td>0.2<td>-0<td>.<td>7<td>13<td>1947<td>16.6<td>23.11.1984<td>-9.5<td>23.11.1965</tr>
<tr><td>Kempten<td>705<td>1029.2<td>stark bew.<td>NNW<td>4<td>-0.1<td>-1.1<td>-0.4<td>-0.8<td>-0.5<td>-1<td>.<td>7<td>35<td>1952<td>16.6<td>23.11.1980<td>-19.4<td>24.11.1975</tr>
<tr><td>Oberstdorf<td class="l">812<td class="d">-<td>Schneefall<td>SSE<td>7<td>-0.7<td>-1.5<td>-0.8<td>-1.4<td>-1.3<td>-2<td>.<td>16<td>60<td>1936<td>18.0<td>22.11.1960<td>-22.4<td>22.11.1998</tr>
<tr><td>Zugspitze<td class="l">2962<td class="d">-<td>Schneefall<td>N<td>18<td>-12.9<td>-12.9<td>-10.8<td>-12.8<td>-12.9<td>X<td>.<td>36<td>145<td>1900<td>4.6<td>30.11.1984<td>-25.9<td>28.11.1915</tr>
<tr><td>Hohenpeißenberg.<td class="l">986<td class="d">-<td>Schn.Sterne<td>WSW<td>29<td>-1.5<td>-2.2<td>-2.2<td>-2.3<td>-2.2<td>-2<td>.<td>13<td>56<td>1879<td>16.7<td>29.11.1930<td>-14.9<td>26.11.1890</tr>
<tr><td>Garm.-Partenk.<td>720<td>1029.0<td>Schn.Sterne<td>SW<td>4<td>0.0<td>-0.8<td>0.4<td>-0.1<td>-0.1<td>-0<td>.<td>14<td>48<td>1936<td>17.4<td>23.11.1984<td>-17.3<td>24.11.1975</tr>
<tr><td>Wendelstein<td class="l">1835<td class="d">-<td>Schneefall<td>WNW<td>43<td>-6.0<td>-6.5<td>-7.1<td>-7.5<td>-7.2<td>-7<td>.<td>16<td>86<td>1951<td>12.1<td>30.11.1984<td>-18.0<td>28.11.1989</tr>
<tr class="s"><td colspan="20"></td></tr>
</tbody>
</table>
</main>
<div class="edge"></div>
</body>
</html>
```

FILE: styles.css
```css
html, body {
  margin: 0;
  padding: 0;
}

body {
  width: 2000px;
  height: 2870px;
  overflow: hidden;
  display: flex;
  flex-direction: column;
  background: #e9e9e7;
  color: #404040;
  font-family: "Liberation Sans", Arial, sans-serif;
  font-size: 20px;
}

.page {
  padding-left: 184px;
}

.title {
  box-sizing: border-box;
  width: 1656px;
  margin: 0;
  padding: 112px 54px 0 0;
  text-align: center;
  font-size: 36px;
  line-height: 40px;
  font-weight: normal;
  color: #262626;
  transform: scaleX(0.83);
  transform-origin: 801px 0;
}

.wx {
  table-layout: fixed;
  width: 1656px;
  border-collapse: separate;
  border-spacing: 0;
}

.c1 { width: 193px; }
.c2 { width: 43px; }
.c3 { width: 68px; }
.c4 { width: 182px; }
.c5 { width: 48px; }
.c6 { width: 38px; }
.c7 { width: 62px; }
.c8 { width: 58px; }
.c9 { width: 58px; }
.c10 { width: 59px; }
.c11 { width: 57px; }
.c12 { width: 62px; }
.c13 { width: 100px; }
.c14 { width: 90px; }
.c15 { width: 64px; }
.c16 { width: 54px; }
.c17 { width: 72px; }
.c18 { width: 110px; }
.c19 { width: 133px; }
.c20 { width: 105px; }

.wx td {
  padding: 0;
  height: 20px;
  line-height: 20px;
  white-space: nowrap;
  overflow: visible;
  text-align: right;
  vertical-align: middle;
}

/* header */
.wx thead td { letter-spacing: -0.4px; }
.wx .ha td { height: 18px; line-height: 18px; }
.wx .hb td, .wx .hc td, .wx .hd td { height: 22px; line-height: 22px; }
.wx .deu { text-align: center; padding-left: 20px; font-weight: bold; }
.wx .hb td { font-weight: bold; }
.wx .h-st { text-align: left; }
.wx .h-wet { text-align: left; padding-left: 37px; }
.wx .h-wind { text-align: left; padding-left: 56px; }
.wx .h-temp { text-align: center; padding-left: 94px; }
.wx .h-son { text-align: left; padding-left: 74px; }
.wx .h-sch { text-align: left; padding-left: 16px; }
.wx .h-ext { text-align: center; padding-left: 54px; }
.wx .h-tau { text-align: left; padding-left: 30px; }
.wx .h-mit { text-align: left; padding-left: 26px; }
.wx .h-min { padding-right: 10px; }
.wx .h-na { text-align: left; padding-left: 2px; }
.wx .h-vort { text-align: left; padding-left: 80px; }
.wx .h-sh { text-align: left; padding-left: 20px; }
.wx .h-dek {
  text-align: center;
  padding-left: 66px;
  letter-spacing: 0.3px;
  word-spacing: 8px;
}
.wx .h-m { padding-right: 6px; }
.wx .h-hpa { padding-right: 2px; }
.wx .h-vor { text-align: left; padding-left: 55px; }
.wx .h-2m { padding-right: 8px; }
.wx .h-5cm { text-align: left; padding-left: 8px; }
.wx .h-std { text-align: left; padding-left: 84px; }
.wx .h-cm { text-align: left; padding-left: 30px; }
.wx .h-dat { text-align: left; padding-left: 8px; }
.wx .h-dat2 { text-align: left; padding-left: 12px; }

/* body columns */
.wx tbody td:nth-child(1),
.wx tbody td:nth-child(5) {
  text-align: left;
  letter-spacing: -0.5px;
}
.wx tbody td:nth-child(3) {
  letter-spacing: -0.3px;
}
.wx tbody td:nth-child(4) {
  text-align: left;
  padding-left: 44px;
  letter-spacing: -0.5px;
}
.wx tbody td:nth-child(18),
.wx tbody td:nth-child(20) {
  text-align: left;
  padding-left: 4px;
}
.wx tbody td.l { text-align: left; }
.wx tbody td.d { padding-right: 6px; }

/* group rules: thin line, gap, thick line */
.wx tr.s td {
  height: 2px;
  line-height: 0;
  font-size: 0;
  padding: 0;
  border-top: 1px solid #505050;
  border-bottom: 3px solid #444444;
}

.edge {
  margin-top: auto;
  height: 5px;
  background: #6c6c6c;
}
```
